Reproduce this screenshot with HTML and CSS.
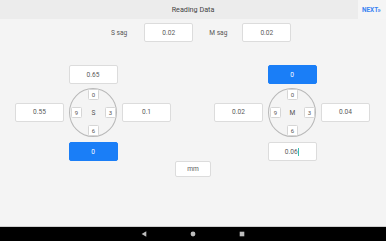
FILE: index.html
```html
<!DOCTYPE html>
<html>
<head>
<meta charset="utf-8">
<link rel="stylesheet" href="styles.css">
</head>
<body>
<div class="screen">
  <header class="topbar">
    <div class="title">Reading Data</div>
    <div class="next">NEXT»</div>
  </header>
  <main class="content">
    <div class="sag-row">
      <span class="label s-label">S sag</span>
      <div class="box">0.02</div>
      <span class="label m-label">M sag</span>
      <div class="box">0.02</div>
    </div>
    <div class="dials">
      <div class="dial">
        <div class="box top">0.65</div>
        <div class="box side left">0.55</div>
        <div class="circle">
          <div class="mini c-top">0</div>
          <div class="mini c-left">9</div>
          <div class="c-mid">S</div>
          <div class="mini c-right">3</div>
          <div class="mini c-bottom">6</div>
        </div>
        <div class="box side right">0.1</div>
        <div class="box bottom active">0</div>
      </div>
      <div class="dial">
        <div class="box top active">0</div>
        <div class="box side left">0.02</div>
        <div class="circle">
          <div class="mini c-top">0</div>
          <div class="mini c-left">9</div>
          <div class="c-mid">M</div>
          <div class="mini c-right">3</div>
          <div class="mini c-bottom">6</div>
        </div>
        <div class="box side right">0.04</div>
        <div class="box bottom">0.06<span class="caret"></span></div>
      </div>
    </div>
    <div class="unit-row">
      <div class="box unit">mm</div>
    </div>
  </main>
  <nav class="navbar">
    <svg class="nav-icon" width="6" height="6" viewBox="0 0 6 6"><polygon points="5.3,0.3 5.3,5.7 0.6,3" fill="#bdbdbd"/></svg>
    <svg class="nav-icon" width="6" height="6" viewBox="0 0 6 6"><circle cx="3" cy="3" r="2.4" fill="#bdbdbd"/></svg>
    <svg class="nav-icon" width="6" height="6" viewBox="0 0 6 6"><rect x="0.7" y="0.7" width="4.6" height="4.6" fill="#bdbdbd"/></svg>
  </nav>
</div>
</body>
</html>
```
FILE: styles.css
```css
* { box-sizing: border-box; }
html, body { margin: 0; padding: 0; }
body {
  width: 386px;
  height: 241px;
  overflow: hidden;
  font-family: Roboto, "Liberation Sans", sans-serif;
  background: #f4f4f4;
}
.screen {
  display: flex;
  flex-direction: column;
  width: 386px;
  height: 241px;
}
.topbar {
  height: 19px;
  flex: none;
  background: #ececec;
  display: flex;
  align-items: stretch;
}
.title {
  flex: 1;
  display: flex;
  align-items: center;
  justify-content: center;
  font-size: 7.2px;
  color: #454545;
  padding-left: 28px;
}
.next {
  width: 28px;
  background: #f5f5f5;
  display: flex;
  align-items: center;
  padding-left: 4px;
  font-size: 6.4px;
  font-weight: bold;
  color: #3b84f2;
}
.content {
  flex: 1;
  display: flex;
  flex-direction: column;
}
.box {
  background: #fff;
  border: 1px solid #dcdcdc;
  border-radius: 2px;
  width: 49px;
  height: 19px;
  display: flex;
  align-items: center;
  justify-content: center;
  font-size: 6.6px;
  color: #5a5a5a;
}
.box.active {
  background: #1a7ef7;
  border-color: #1a7ef7;
  color: #fff;
}
.sag-row {
  display: flex;
  align-items: center;
  margin-top: 4px;
  padding-left: 111px;
}
.label {
  font-size: 6.6px;
  color: #555;
}
.s-label { margin-right: 17px; }
.m-label { margin-left: 16px; margin-right: 15px; }
.dials {
  display: flex;
  justify-content: space-between;
  padding: 0 16px 0 15px;
  margin-top: 23px;
}
.dial {
  display: grid;
  grid-template-columns: 49px 48px 49px;
  grid-template-rows: 19px 4px 49px 5px 19px;
  column-gap: 5px;
  align-items: center;
}
.dial .top { grid-row: 1; grid-column: 2; justify-self: center; }
.dial .left { grid-row: 3; grid-column: 1; margin-top: -1px; }
.dial .right { grid-row: 3; grid-column: 3; margin-top: -1px; }
.dial .circle { grid-row: 3; grid-column: 2; }
.dial .bottom { grid-row: 5; grid-column: 2; justify-self: center; }
.circle {
  width: 48px;
  height: 49px;
  border: 1px solid #b8b8b8;
  border-radius: 50%;
  display: grid;
  grid-template-columns: 1fr 11px 1fr;
  grid-template-rows: auto 1fr auto;
  padding: 0 0 0 1px;
  align-items: center;
}
.mini {
  width: 11px;
  height: 11px;
  background: #fff;
  border: 1px solid #d6d6d6;
  border-radius: 1.5px;
  display: flex;
  align-items: center;
  justify-content: center;
  font-size: 6px;
  color: #555;
}
.c-top { grid-row: 1; grid-column: 2; }
.c-bottom { grid-row: 3; grid-column: 2; }
.c-left { grid-row: 2; grid-column: 1; justify-self: start; }
.c-right { grid-row: 2; grid-column: 3; justify-self: end; }
.c-mid {
  grid-row: 2; grid-column: 2;
  text-align: center;
  font-size: 6.6px;
  color: #555;
}
.caret {
  display: inline-block;
  width: 1px;
  height: 8px;
  background: #38c0b0;
  margin-left: 0.5px;
}
.unit-row {
  display: flex;
  justify-content: center;
}
.box.unit {
  width: 36px;
  height: 16px;
}
.navbar {
  flex: none;
  height: 15px;
  background: #000;
  border-top: 1px solid #cfcfcf;
  display: flex;
  align-items: center;
  justify-content: center;
  gap: 43px;
}
.nav-icon { display: block; }
```
